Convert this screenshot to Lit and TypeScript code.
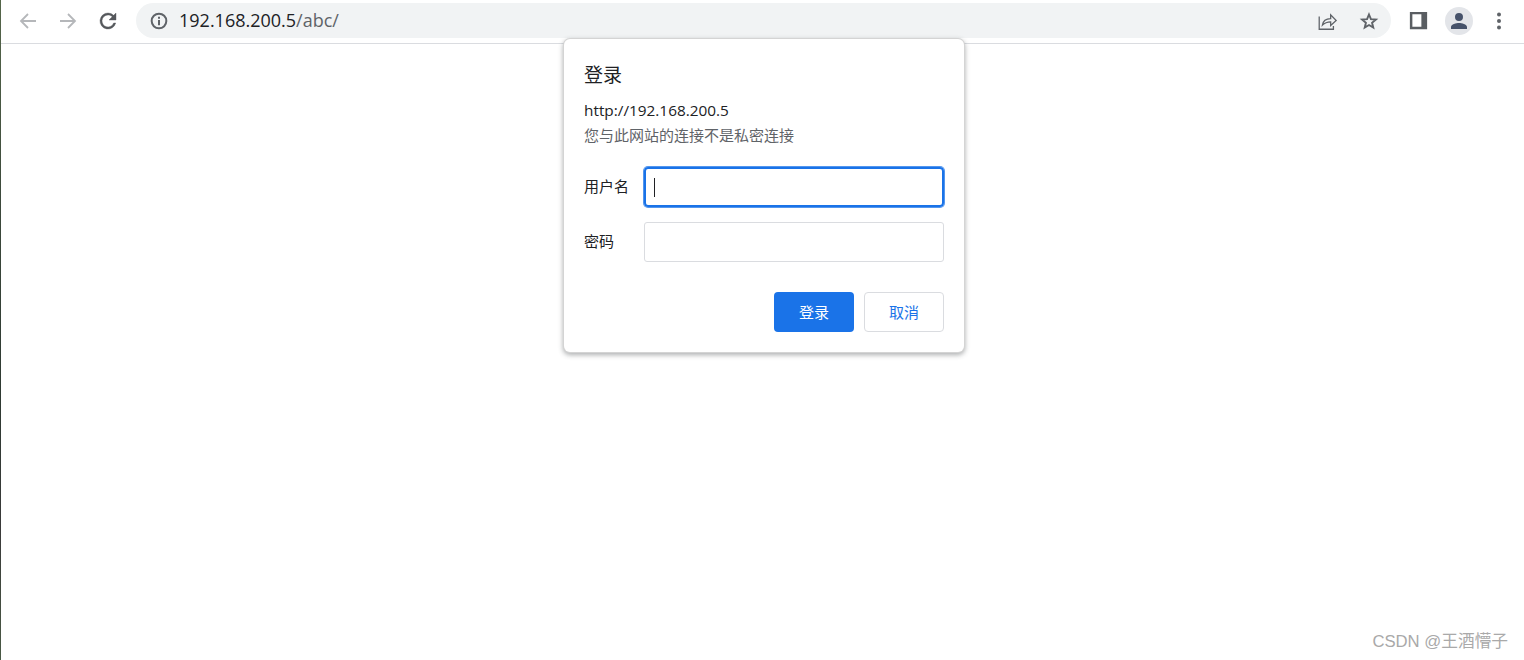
import { LitElement, css, html, svg } from 'lit'
import { customElement } from 'lit/decorators.js'

const icon = (body: unknown, size = 24) => html`<svg width=${size} height=${size} viewBox="0 0 24 24">${body}</svg>`

const back = svg`<path fill="none" stroke="currentColor" stroke-width="1.8" d="M20 12H5.5M12 5l-7 7 7 7"/>`
const forward = svg`<path fill="none" stroke="currentColor" stroke-width="1.8" d="M4 12h14.5M12 5l7 7-7 7"/>`
const reload = svg`<path fill="currentColor" stroke="currentColor" stroke-width=".4" d="M17.65 6.35A7.96 7.96 0 0 0 12 4a8 8 0 1 0 7.73 10h-2.08A6 6 0 1 1 12 6c1.66 0 3.14.69 4.22 1.78L13 11h7V4l-2.35 2.35z"/>`
const info = svg`<path fill="currentColor" d="M10.8 6.8h2.4v2.4h-2.4zm0 4h2.4v6.4h-2.4zM12 2a10 10 0 1 0 0 20 10 10 0 0 0 0-20zm0 17.6a7.6 7.6 0 1 1 0-15.2 7.6 7.6 0 0 1 0 15.2z"/>`
const share = svg`<path fill="none" stroke="currentColor" stroke-width="1.4" d="M3.5 7v14h15.5v-3.5M7 16.5c.6-4.5 3.8-7.2 9-7.2V5.2l6 6.2-6 5.6v-4.1c-3.6 0-6.5 1-9 3.6z"/>`
const star = svg`<path fill="none" stroke="currentColor" stroke-width="2.3" stroke-linejoin="miter" d="M12 4.2l2.3 5.5 6 .5-4.6 3.9 1.4 5.8-5.1-3.1-5.1 3.1 1.4-5.8-4.6-3.9 6-.5z"/>`
const panel = svg`<path fill="currentColor" fill-rule="evenodd" d="M3 3h18v18H3zM5.6 5.6v12.8h9.4V5.6z"/>`
const person = svg`<path fill="currentColor" d="M12 12a4 4 0 1 0 0-8 4 4 0 0 0 0 8zm0 2c-2.7 0-8 1.3-8 4v2h16v-2c0-2.7-5.3-4-8-4z"/>`
const dots = svg`<circle cx="12" cy="5.5" r="2" fill="currentColor"/><circle cx="12" cy="12" r="2" fill="currentColor"/><circle cx="12" cy="18.5" r="2" fill="currentColor"/>`

@customElement('app-root')
export class AppRoot extends LitElement {
  render() {
    return html`
      <div class="strip"></div>
      <div class="page">
        <header class="toolbar">
          <span class="btn off first">${icon(back)}</span>
          <span class="btn off">${icon(forward)}</span>
          <span class="btn dark">${icon(reload)}</span>
          <div class="omnibox">
            <span class="info">${icon(info, 20)}</span>
            <span class="url">192.168.200.5<span class="path">/abc/</span></span>
            <span class="grow"></span>
            <span class="share">${icon(share, 22)}</span>
            <span class="star">${icon(star, 20)}</span>
          </div>
          <span class="panel">${icon(panel, 23)}</span>
          <span class="avatar">${icon(person, 24)}</span>
          <span class="dots">${icon(dots)}</span>
        </header>
      </div>

      <form class="dialog" @submit=${(e: Event) => e.preventDefault()}>
        <h2>登录</h2>
        <div class="origin">http://192.168.200.5</div>
        <div class="note">您与此网站的连接不是私密连接</div>
        <div class="fields">
          <label>用户名</label>
          <div class="input focused"><i class="caret"></i></div>
          <label>密码</label>
          <div class="input"></div>
        </div>
        <div class="actions">
          <button class="primary">登录</button>
          <button class="ghost" type="button">取消</button>
        </div>
      </form>

      <div class="mark">CSDN @王酒懵子</div>
    `
  }

  static styles = css`
    :host {
      display: flex;
      position: relative;
      height: 660px;
      overflow: hidden;
      background: #fff;
      font-family: "Open Sans", "Noto Sans CJK SC", sans-serif;
      color: #202124;
    }
    .strip {
      width: 1px;
      flex: none;
      background: linear-gradient(#55664a, #3d4a3c 30%, #2f3a33 60%, #3a3a3a 80%, #4a5a45);
    }
    .page {
      flex: 1;
    }
    .toolbar {
      display: flex;
      align-items: center;
      height: 43px;
      box-sizing: border-box;
      padding-bottom: 2px;
      box-shadow: 0 1px 0 #dadce0;
      color: #5f6368;
    }
    svg {
      display: block;
    }
    .btn {
      display: flex;
      margin-right: 16px;
    }
    .btn.first {
      margin-left: 15px;
    }
    .btn.off {
      color: #b5b7ba;
    }
    .btn.dark {
      color: #55585c;
    }
    .omnibox {
      display: flex;
      align-items: center;
      width: 1255px;
      height: 35px;
      border-radius: 18px;
      background: #f1f3f4;
    }
    .info {
      margin-left: 13px;
      color: #5f6368;
    }
    .url {
      margin-left: 10px;
      padding-bottom: 2px;
      font-size: 18px;
      color: #202124;
    }
    .path {
      color: #5f6368;
    }
    .grow {
      flex: 1;
    }
    .share {
      margin-right: 21px;
    }
    .star {
      margin-right: 12px;
    }
    .panel {
      margin-left: 16px;
      color: #5a5e62;
    }
    .avatar {
      display: flex;
      align-items: center;
      justify-content: center;
      width: 28px;
      height: 28px;
      margin-left: 15px;
      border-radius: 50%;
      background: #e3e5e9;
      color: #46526a;
    }
    .dots {
      margin-left: 13.5px;
      color: #5f6368;
    }
    .dialog {
      position: absolute;
      top: 39px;
      left: 564px;
      width: 400px;
      height: 313px;
      box-sizing: border-box;
      padding: 24px 20px 20px;
      border-radius: 6px;
      background: #fff;
      box-shadow: 0 0 0 1px #d4d4d4, 0 2px 5px 1px rgba(60, 64, 67, 0.42);
      display: flex;
      flex-direction: column;
    }
    h2 {
      margin: 0;
      font-size: 19px;
      font-weight: 400;
      line-height: 24px;
      color: #202124;
    }
    .origin {
      margin-top: 12px;
      font-size: 15.35px;
      line-height: 22px;
    }
    .note {
      margin-top: 4px;
      font-size: 15px;
      line-height: 20px;
      color: #5f6368;
    }
    .fields {
      display: grid;
      grid-template-columns: 60px 300px;
      grid-auto-rows: 40px;
      row-gap: 15px;
      align-items: center;
      margin-top: 22px;
    }
    label {
      padding-bottom: 3px;
      font-size: 15px;
    }
    .input {
      display: flex;
      align-items: center;
      height: 40px;
      box-sizing: border-box;
      padding-left: 9px;
      border: 1px solid #dadce0;
      border-radius: 3px;
    }
    .input.focused {
      border: 2px solid #1a73e8;
      border-radius: 4px;
      padding-left: 8px;
      box-shadow: 0 0 0 1px rgba(26, 115, 232, 0.75);
    }
    .caret {
      width: 1px;
      height: 19px;
      background: #202124;
    }
    .actions {
      display: flex;
      justify-content: flex-end;
      gap: 10px;
      margin-top: 30px;
    }
    button {
      width: 80px;
      height: 40px;
      padding: 0 0 2px;
      border-radius: 4px;
      font: inherit;
      font-size: 15px;
    }
    .primary {
      border: 0;
      background: #1a73e8;
      color: #fff;
    }
    .ghost {
      border: 1px solid #dadce0;
      background: #fff;
      color: #1a73e8;
    }
    .mark {
      position: absolute;
      right: 16px;
      bottom: 8px;
      font-family: "Liberation Sans", "Noto Sans CJK SC", sans-serif;
      font-size: 16.7px;
      line-height: 20px;
      color: #a9a9a9;
    }
  `
}

declare global {
  interface HTMLElementTagNameMap {
    'app-root': AppRoot
  }
}
